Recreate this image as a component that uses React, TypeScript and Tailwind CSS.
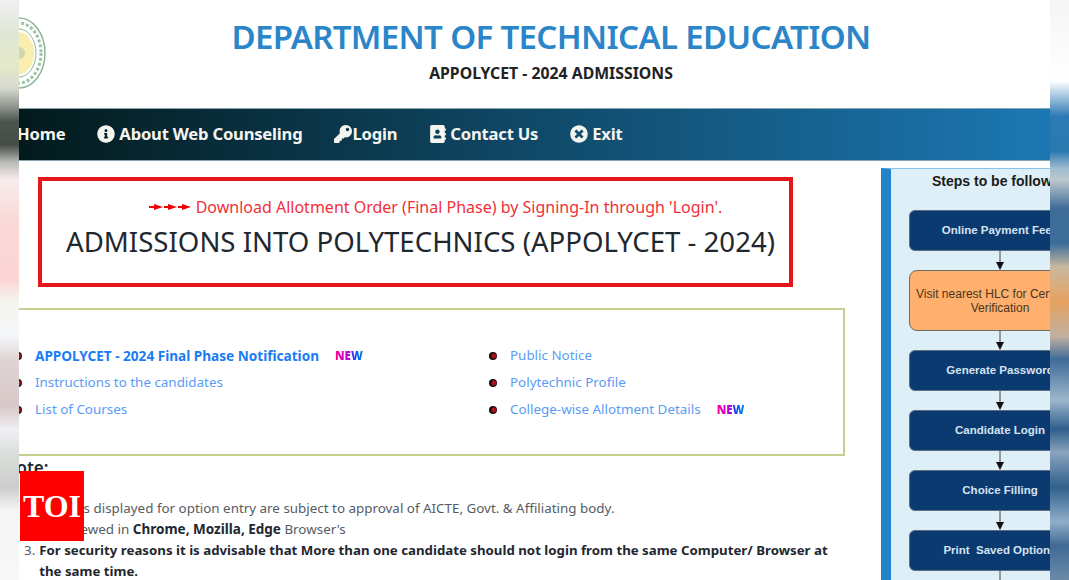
import { FaAddressBook, FaInfoCircle, FaKey, FaTimesCircle } from "react-icons/fa";

const boxFont = { fontFamily: '"Liberation Sans", Arial, sans-serif' };

const NewTag = () => (
  <span className="ml-[16px] inline-block bg-[linear-gradient(90deg,#ff0090_0%,#c000e0_45%,#0050ff_75%,#0090d0_100%)] bg-clip-text text-[11.5px] leading-none font-black text-transparent">
    NEW
  </span>
);

const Bullet = () => (
  <span className="mr-[13px] inline-block h-[8px] w-[8px] shrink-0 rounded-full bg-[radial-gradient(circle_at_60%_50%,#b3121a_0%,#b3121a_25%,#0c0c0c_55%)]" />
);

const Seal = () => (
  <svg viewBox="0 0 54 74" className="-ml-[27px] h-[74px] w-[54px] shrink-0">
    <ellipse cx="27" cy="37" rx="26" ry="35" fill="#fff" stroke="#8cb898" strokeWidth="1.5" />
    <ellipse cx="27" cy="37" rx="22" ry="30" fill="none" stroke="#9cc3a6" strokeWidth="3" strokeDasharray="3 2" />
    <ellipse cx="27" cy="37" rx="17" ry="24" fill="#fff" stroke="#8cb898" strokeWidth="1" />
    <ellipse cx="27" cy="37" rx="15" ry="21" fill="#faedb0" />
    <circle cx="27" cy="37" r="6" fill="#cfd8a8" />
  </svg>
);

const Arrow = () => (
  <svg viewBox="0 0 10 19" className="h-[19px] w-[10px] shrink-0">
    <line x1="5" y1="0" x2="5" y2="12" stroke="#444" strokeWidth="1" />
    <polygon points="1,11 9,11 5,19" fill="#111" />
  </svg>
);

const FlowBox = ({ label }: { label: string }) => (
  <>
    <div className="flex h-[41px] w-[182px] shrink-0 items-center justify-center rounded-[6px] border border-[#5d6f80] bg-[#0b3a70] pt-[1px] text-[11.5px] font-bold whitespace-pre text-[#d5e3f0]">
      {label}
    </div>
    <Arrow />
  </>
);

const RedArrows = () => (
  <svg viewBox="0 0 42 8" className="mr-[5px] h-[8px] w-[42px] shrink-0" fill="#f00000">
    <polygon points="0,3 5,3 5,1 14,4 5,7 5,5 0,5" />
    <polygon points="15,3 19,3 19,1 28,4 19,7 19,5 15,5" />
    <polygon points="29,3 33,3 33,1 42,4 33,7 33,5 29,5" />
  </svg>
);

const navItems = [
  { label: "About Web Counseling", icon: <FaInfoCircle className="mr-[4px] text-[18px]" /> },
  { label: "Login", icon: <FaKey className="text-[18px]" /> },
  { label: "Contact Us", icon: <FaAddressBook className="mr-[3px] text-[18px]" /> },
  { label: "Exit", icon: <FaTimesCircle className="mr-[4px] text-[18px]" /> },
];

const App = () => {
  return (
    <div
      className="relative flex h-[580px] w-[1069px] overflow-hidden bg-white"
      style={{ fontFamily: '"Noto Sans", "Open Sans", sans-serif' }}
    >
      {/* blurred edges of the page behind */}
      <div className="w-[19px] shrink-0 bg-[linear-gradient(180deg,#f0f0f0_0%,#dfe6d4_6%,#e6e9c8_11%,#d8dcd0_15%,#9a9e98_18%,#4c5450_21%,#454c48_25%,#bbbbb8_28%,#f8ecec_31%,#fbd8d8_38%,#fbd4d4_48%,#f5f5ee_52%,#f4f6fa_58%,#e0d4d4_62%,#d8c8c8_70%,#eeeef4_74%,#d8dcd8_79%,#cccccc_84%,#f5f5f5_88%,#f8f8f8_100%)]" />

      <main className="flex h-full w-[1031px] shrink-0 flex-col overflow-hidden">
        <header className="flex h-[108px] shrink-0 items-start">
          <div className="mt-[16px] flex">
            <Seal />
          </div>
          <div className="flex-1 pt-[16px] pl-[6px] text-center">
            <h1 className="text-[33px] leading-[42px] font-semibold tracking-[-0.66px] text-[#2a86c8]">DEPARTMENT OF TECHNICAL EDUCATION</h1>
            <h2 className="mt-[5px] text-[15.8px] leading-[20px] font-bold text-[#222]">APPOLYCET - 2024 ADMISSIONS</h2>
          </div>
        </header>

        <nav className="flex h-[53px] shrink-0 items-center gap-[32px] border-y border-[#8aa4b0] bg-[linear-gradient(90deg,#031a1c_0%,#1c78b4_100%)] text-[16.6px] font-bold tracking-[-0.2px] text-[#f4f4f0]">
          <a className="-ml-[2px]">Home</a>
          {navItems.map((item) => (
            <a key={item.label} className="flex items-center">
              {item.icon}
              {item.label}
            </a>
          ))}
        </nav>

        <div className="flex min-h-0 flex-1">
          <div className="w-[862px] shrink-0">
            <section className="mt-[16px] ml-[19px] flex h-[110px] w-[755px] flex-col items-center border-[4px] border-[#e8141c] pt-[14px] pl-[10px]">
              <p className="ml-[30px] flex items-center text-[16px] leading-[24px] text-[#f0303a]">
                <RedArrows />
                Download Allotment Order (Final Phase) by Signing-In through 'Login'.
              </p>
              <p className="mt-[4px] text-[27.6px] leading-[36px] text-[#1f2830]">ADMISSIONS INTO POLYTECHNICS (APPOLYCET - 2024)</p>
            </section>

            <section className="mt-[21px] -ml-[5px] grid h-[148px] w-[831px] grid-cols-[475px_1fr] border-2 border-l-0 border-[#c2cf8f] pt-[32px] text-[13.4px] leading-[27px] text-[#5b9bf5]">
              <ul>
                <li className="flex items-center text-[13.6px] font-bold text-[#1a7cf5]">
                  <Bullet />
                  APPOLYCET - 2024 Final Phase Notification
                  <NewTag />
                </li>
                <li className="flex items-center">
                  <Bullet />
                  Instructions to the candidates
                </li>
                <li className="flex items-center">
                  <Bullet />
                  List of Courses
                </li>
              </ul>
              <ul>
                <li className="flex items-center">
                  <Bullet />
                  Public Notice
                </li>
                <li className="flex items-center">
                  <Bullet />
                  Polytechnic Profile
                </li>
                <li className="flex items-center">
                  <Bullet />
                  College-wise Allotment Details
                  <NewTag />
                </li>
              </ul>
            </section>

            <h3 className="-ml-[16px] text-[17px] leading-[24px] font-semibold text-[#1f2830]">Note:</h3>
            <ol className="mt-[18px] pr-[46px] text-[13.4px] leading-[21px] text-[#555c64]">
              <li className="flex pl-[5px]">
                <span className="mr-[4px]">1.</span>
                <span>Courses displayed for option entry are subject to approval of AICTE, Govt. &amp; Affiliating body.</span>
              </li>
              <li className="flex pl-[5px]">
                <span className="mr-[4px]">2.</span>
                <span>
                  Best viewed in <b className="text-[13.5px] leading-none text-[#1f2830]">Chrome, Mozilla, Edge</b> Browser's
                </span>
              </li>
              <li className="flex pl-[5px]">
                <span className="mr-[4px]">3.</span>
                <b className="text-[13.25px] text-[#1f2830]">
                  For security reasons it is advisable that More than one candidate should not login from the same Computer/ Browser at the same time.
                </b>
              </li>
            </ol>
          </div>

          <aside className="mt-[7px] flex h-[420px] w-[220px] shrink-0 flex-col border-t border-l-[10px] border-t-[#8ec2e4] border-l-[#2383c8] bg-[#dfeff7]" style={boxFont}>
            <h4 className="pt-[4px] pl-[41px] text-[14px] leading-[16px] font-bold whitespace-nowrap text-[#1a1a1a]">Steps to be followed</h4>
            <div className="mt-[21px] ml-[18px] flex flex-col items-center self-start">
              <FlowBox label="Online Payment Fees" />
              <div className="flex h-[61px] w-[182px] shrink-0 items-center justify-center rounded-[8px] border border-[#6b6b60] bg-[#ffb06e] px-[5px] text-center text-[12px] leading-[14px] text-[#4a3520]">
                Visit nearest HLC for Certificate Verification
              </div>
              <Arrow />
              <FlowBox label="Generate Password" />
              <FlowBox label="Candidate Login" />
              <FlowBox label="Choice Filling" />
              <FlowBox label="Print  Saved Options" />
            </div>
          </aside>
        </div>
      </main>

      <div className="w-[19px] shrink-0 bg-[linear-gradient(180deg,#f5f5f5_0%,#ffffff_14%,#2e7ab5_20%,#2a78b0_26%,#9fbcd0_29%,#bcc8cc_31%,#3f6c98_36%,#3c6d9a_42%,#c8b8a0_46%,#e6a25f_52%,#c0b0a0_58%,#3f6c98_62%,#9db6cc_69%,#2f5e8c_74%,#8aa4be_78%,#30608c_84%,#90aec8_90%,#406a96_94%,#6a8aa8_100%)]" />

      {/* TOI watermark */}
      <div
        className="absolute top-[471px] left-[20px] flex h-[70px] w-[64px] items-center justify-center bg-[#ff0000] pb-[1px] text-[32px] font-bold text-white"
        style={{ fontFamily: '"Liberation Serif", serif' }}
      >
        TOI
      </div>
    </div>
  );
};

export default App;
